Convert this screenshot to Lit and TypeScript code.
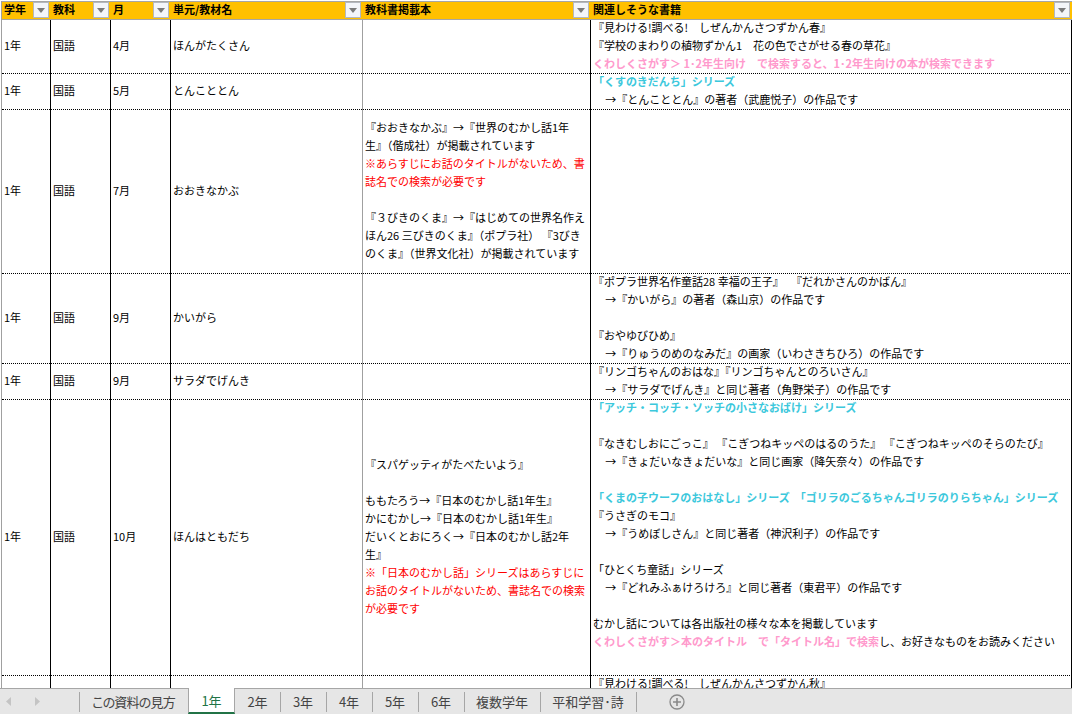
import { LitElement, html, css } from "lit";
import { customElement } from "lit/decorators.js";

type Line = { t?: string; c?: string; parts?: { t: string; c?: string }[] };
const L = (t: string, c = ""): Line => ({ t, c });
const blank = L("");
const ind = "     ";

interface Row {
  h: number;
  month: string;
  unit: string;
  book: Line[];
  rel: Line[];
  top?: boolean;
}

const rows: Row[] = [
  {
    h: 54, month: "4月", unit: "ほんがたくさん", book: [],
    rel: [
      L("『見わける!調べる!　しぜんかんさつずかん春』"),
      L("『学校のまわりの植物ずかん1　花の色でさがせる春の草花』"),
      L("くわしくさがす＞ 1･2年生向け　で検索すると、1･2年生向けの本が検索できます", "pink"),
    ],
  },
  {
    h: 36, month: "5月", unit: "とんこととん", book: [],
    rel: [L("「くすのきだんち」シリーズ", "blue"), L(ind + "→『とんこととん』の著者（武鹿悦子）の作品です")],
  },
  {
    h: 164, month: "7月", unit: "おおきなかぶ",
    book: [
      L("『おおきなかぶ』→『世界のむかし話1年"),
      L("生』（偕成社）が掲載されています"),
      L("※あらすじにお話のタイトルがないため、書", "red"),
      L("誌名での検索が必要です", "red"),
      blank,
      L("『３びきのくま』→『はじめての世界名作え"),
      L("ほん26 三びきのくま』（ポプラ社） 『3びき"),
      L("のくま』（世界文化社）が掲載されています"),
    ],
    rel: [],
  },
  {
    h: 90, month: "9月", unit: "かいがら", book: [],
    rel: [
      L("『ポプラ世界名作童話28 幸福の王子』   『だれかさんのかばん』"),
      L(ind + "→『かいがら』の著者（森山京）の作品です"),
      blank,
      L("『おやゆびひめ』"),
      L(ind + "→『りゅうのめのなみだ』の画家（いわさきちひろ）の作品です"),
    ],
  },
  {
    h: 36, month: "9月", unit: "サラダでげんき", book: [],
    rel: [
      L("『リンゴちゃんのおはな』『リンゴちゃんとのろいさん』"),
      L(ind + "→『サラダでげんき』と同じ著者（角野栄子）の作品です"),
    ],
  },
  {
    h: 276, month: "10月", unit: "ほんはともだち", top: true,
    book: [
      L("『スパゲッティがたべたいよう』"),
      blank,
      L("ももたろう→『日本のむかし話1年生』"),
      L("かにむかし→『日本のむかし話1年生』"),
      L("だいくとおにろく→『日本のむかし話2年"),
      L("生』"),
      L("※「日本のむかし話」シリーズはあらすじに", "red"),
      L("お話のタイトルがないため、書誌名での検索", "red"),
      L("が必要です", "red"),
    ],
    rel: [
      L("「アッチ・コッチ・ソッチの小さなおばけ」シリーズ", "blue"),
      blank,
      L("『なきむしおにごっこ』 『こぎつねキッペのはるのうた』 『こぎつねキッペのそらのたび』"),
      L(ind + "→『きょだいなきょだいな』と同じ画家（降矢奈々）の作品です"),
      blank,
      L("「くまの子ウーフのおはなし」シリーズ  「ゴリラのごるちゃんゴリラのりらちゃん」シリーズ", "blue"),
      L("『うさぎのモコ』"),
      L(ind + "→『うめぼしさん』と同じ著者（神沢利子）の作品です"),
      blank,
      L("「ひとくち童話」シリーズ"),
      L(ind + "→『どれみふぁけろけろ』と同じ著者（東君平）の作品です"),
      blank,
      L("むかし話については各出版社の様々な本を掲載しています"),
      {
        parts: [
          { t: "くわしくさがす＞本のタイトル　で「タイトル名」で検索", c: "pink" },
          { t: "し、お好きなものをお読みください" },
        ],
      },
    ],
  },
  {
    h: 60, month: "", unit: "", top: true, book: [],
    rel: [L("『見わける!調べる!　しぜんかんさつずかん秋』")],
  },
];

const headers = ["学年", "教科", "月", "単元/教材名", "教科書掲載本", "関連しそうな書籍"];
const tabs = [
  { t: "この資料の見方", w: 109, narrow: true },
  { t: "1年", w: 47, active: true },
  { t: "2年", w: 45 },
  { t: "3年", w: 46 },
  { t: "4年", w: 46 },
  { t: "5年", w: 46 },
  { t: "6年", w: 46 },
  { t: "複数学年", w: 76 },
  { t: "平和学習･詩", w: 96 },
];

@customElement("app-root")
export class AppRoot extends LitElement {
  static styles = css`
    :host {
      display: flex;
      flex-direction: column;
      width: 1072px;
      height: 714px;
      overflow: hidden;
      background: #fff;
      color: #000;
      font-family: "Noto Sans CJK JP", "Noto Sans", sans-serif;
      font-size: 11px;
    }
    .sheet {
      flex: 0 0 688px;
      height: 688px;
      overflow: hidden;
      box-sizing: border-box;
      padding: 1px 0 0 1px;
    }
    .table { border-left: 1px solid #a0a0a0; width: 1070px; }
    .grid {
      display: grid;
      grid-template-columns: 49px 60px 60px 192px 228px 481px;
    }
    .head {
      height: 19px;
      box-sizing: border-box;
      border-top: 1px solid #a6a6a6;
      border-bottom: 1px solid #a6a6a6;
      background: #ffc000;
      font-weight: 700;
    }
    .hcell {
      display: flex;
      align-items: flex-start;
      justify-content: space-between;
      padding-left: 2px;
      white-space: nowrap;
      line-height: 15px;
    }
    .filter {
      flex: none;
      display: flex;
      align-items: center;
      justify-content: center;
      width: 16px;
      height: 16px;
      box-sizing: border-box;
      margin: 0 2px 0 0;
      border: 1px solid #b4b8bf;
      background: #f3f5f9;
    }
    .filter svg { display: block; }
    .row { position: relative; }
    .row::after {
      content: "";
      position: absolute;
      left: 0;
      right: 0;
      bottom: 0;
      border-bottom: 1px dotted #000;
    }
    .cell {
      display: flex;
      flex-direction: column;
      justify-content: center;
      box-sizing: border-box;
      border-right: 1px solid #000;
      padding-left: 2px;
      white-space: pre;
      overflow: hidden;
    }
    .cell.grey { border-right-color: #a0a0a0; }
    .cell.top { justify-content: flex-start; }
    .line { height: 18px; line-height: 14px; flex: none; }
    .pink { color: #ff99cc; font-weight: 700; }
    .blue { color: #3cc8dc; font-weight: 700; }
    .red { color: #ff0000; }
    .tabbar {
      flex: 1;
      display: flex;
      box-sizing: border-box;
      border-top: 1px solid #a6a6a6;
      background: #e6e6e6;
      color: #444;
      font-size: 13px;
      font-feature-settings: "palt";
    }
    .nav {
      flex: 0 0 79px;
      display: flex;
      align-items: center;
      gap: 24px;
      padding-left: 6px;
      box-sizing: border-box;
    }
    .tab {
      flex: none;
      box-sizing: border-box;
      display: flex;
      align-items: center;
      justify-content: center;
      height: 25px;
      position: relative;
    }
    .tab.narrow { letter-spacing: -0.8px; }
    .tab::before {
      content: "";
      position: absolute;
      left: 0;
      top: 3px;
      bottom: 2px;
      border-left: 1px solid #a6a6a6;
    }
    .tab.active {
      margin-top: -1px;
      height: 26px;
      background: #fff;
      color: #217346;
      border-left: 1px solid #a6a6a6;
      border-right: 1px solid #a6a6a6;
      border-bottom: 2px solid #217346;
    }
    .tab.active::before { display: none; }
    .tab.active + .tab::before { display: none; }
    .end {
      flex: none;
      width: 1px;
      height: 20px;
      margin-top: 3px;
      background: #a6a6a6;
    }
    .add { flex: none; margin: 5px 0 0 32px; display: block; }
  `;

  private lines(ls: Line[]) {
    return ls.map((l) =>
      l.parts
        ? html`<div class="line">${l.parts.map((p) => html`<span class=${p.c ?? ""}>${p.t}</span>`)}</div>`
        : html`<div class="line ${l.c ?? ""}">${l.t}</div>`
    );
  }

  render() {
    return html`
      <div class="sheet">
        <div class="table">
          <div class="grid head">
            ${headers.map(
              (h) => html`<div class="hcell">
                <span>${h}</span>
                <span class="filter">
                  <svg width="8" height="5" viewBox="0 0 8 5"><path d="M0 0H8L4 5Z" fill="#7a7a7a" /></svg>
                </span>
              </div>`
            )}
          </div>
          ${rows.map(
            (r) => html`<div class="grid row" style="height:${r.h}px">
              <div class="cell"><div class="line">${r.month ? "1年" : ""}</div></div>
              <div class="cell"><div class="line">${r.month ? "国語" : ""}</div></div>
              <div class="cell"><div class="line">${r.month}</div></div>
              <div class="cell grey"><div class="line">${r.unit}</div></div>
              <div class="cell">${this.lines(r.book)}</div>
              <div class="cell ${r.top ? "top" : ""}">${this.lines(r.rel)}</div>
            </div>`
          )}
        </div>
      </div>
      <div class="tabbar">
        <div class="nav">
          <svg width="5" height="9" viewBox="0 0 5 9"><path d="M5 0V9L0 4.5Z" fill="#c4c4c4" /></svg>
          <svg width="5" height="9" viewBox="0 0 5 9"><path d="M0 0V9L5 4.5Z" fill="#c4c4c4" /></svg>
        </div>
        ${tabs.map(
          (t) => html`<div class="tab ${t.active ? "active" : ""} ${t.narrow ? "narrow" : ""}" style="width:${t.w}px">${t.t}</div>`
        )}
        <span class="end"></span>
        <svg class="add" width="16" height="16" viewBox="0 0 16 16">
          <circle cx="8" cy="8" r="7" fill="none" stroke="#8a8a8a" stroke-width="1.3" />
          <path d="M8 4V12M4 8H12" stroke="#8a8a8a" stroke-width="1.6" />
        </svg>
      </div>
    `;
  }
}
